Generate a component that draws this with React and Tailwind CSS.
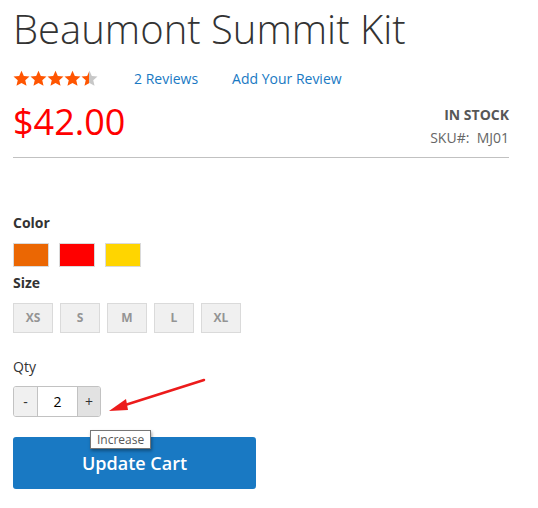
import React from 'react';

const Star = ({ fill = '#ff5501', half = false }) => (
  <svg width="17" height="17" viewBox="0 0 24 24" className="block">
    {half && (
      <defs>
        <linearGradient id="halfStar" x1="0" x2="1" y1="0" y2="0">
          <stop offset="50%" stopColor="#ff5501" />
          <stop offset="50%" stopColor="#c7c7c7" />
        </linearGradient>
      </defs>
    )}
    <path
      d="M12 1l3.3 7.3 8 .8-6 5.4 1.8 7.9L12 18.3l-7.1 4.1 1.8-7.9-6-5.4 8-.8z"
      fill={half ? 'url(#halfStar)' : fill}
    />
  </svg>
);

const sizes = ['XS', 'S', 'M', 'L', 'XL'];
const colors = ['#eb6703', '#ff0000', '#ffd500'];

const App = () => {
  return (
    <div className="relative w-[538px] h-[508px] overflow-hidden bg-white px-[13px] font-['Open_Sans',sans-serif] text-[#333]">
      <h1 className="pt-[7px] text-[40px] leading-[44px] font-light text-[#333]">Beaumont Summit Kit</h1>

      <div className="mt-[17px] flex items-center h-[20px] w-[496px]">
        <div className="flex">
          <Star />
          <Star />
          <Star />
          <Star />
          <Star half />
        </div>
        <a className="ml-[36px] text-[14px] text-[#1979c3]">2 Reviews</a>
        <a className="ml-[34px] text-[14px] text-[#1979c3]">Add Your Review</a>
      </div>

      <div className="mt-[16px] w-[496px] flex justify-between pb-[9px] border-b border-[#c1c1c1]">
        <div className="text-[36px] leading-[36px] text-[#ff0000]">$42.00</div>
        <div className="text-right text-[14px] leading-[20px] text-[#575757] pt-[1px]">
          <div className="font-bold uppercase text-[#575757]">In Stock</div>
          <div className="mt-[3px] text-[#666]">SKU#:&nbsp;&nbsp;MJ01</div>
        </div>
      </div>

      <div className="mt-[55px] text-[14px] leading-[20px] font-bold">Color</div>
      <div className="mt-[10px] flex gap-[10px]">
        {colors.map((c) => (
          <div key={c} className="w-[36px] h-[24px] border border-[#dadada]" style={{ backgroundColor: c }} />
        ))}
      </div>

      <div className="mt-[6px] text-[14px] leading-[20px] font-bold">Size</div>
      <div className="mt-[10px] flex gap-[7px]">
        {sizes.map((s) => (
          <div key={s} className="w-[40px] h-[30px] flex items-center justify-center border border-[#dadada] bg-[#f0f0f0] text-[12px] font-bold text-[#949494]">
            {s}
          </div>
        ))}
      </div>

      <div className="mt-[24px] text-[14px] leading-[20px]">Qty</div>
      <div className="mt-[9px] flex w-[88px] h-[31px] rounded-[3px] border border-[#c2c2c2] overflow-hidden text-[14px]">
        <div className="w-[24px] flex items-center justify-center bg-[#f0f0f0] border-r border-[#c2c2c2]">-</div>
        <div className="w-[39px] flex items-center justify-center bg-white text-black">2</div>
        <div className="flex-1 flex items-center justify-center bg-[#e2e2e2] border-l border-[#c2c2c2]">+</div>
      </div>

      <button className="mt-[20px] w-[243px] h-[52px] rounded-[3px] bg-[#1979c3] text-white text-[18px] font-semibold">
        Update Cart
      </button>

      <div className="absolute left-[90px] top-[430px] h-[19px] px-[6px] flex items-center bg-white border border-[#767676] shadow-[1px_2px_3px_rgba(0,0,0,0.35)] text-[12px] text-[#575757]">
        Increase
      </div>

      <svg className="absolute left-0 top-0 pointer-events-none" width="538" height="508">
        <line x1="204" y1="380" x2="122" y2="406" stroke="#ec1b1b" strokeWidth="2.5" strokeLinecap="round" />
        <polygon points="109,411 126,399 128,410" fill="#ec1b1b" />
      </svg>
    </div>
  );
};

export default App;
